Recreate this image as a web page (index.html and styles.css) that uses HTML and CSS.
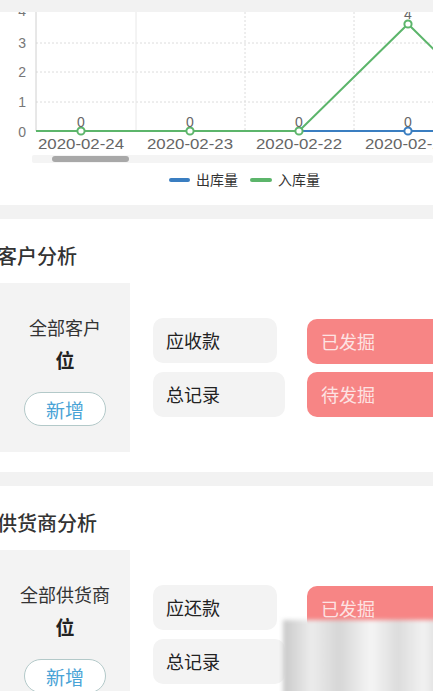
FILE: index.html
```html
<!DOCTYPE html>
<html lang="zh">
<head>
  <meta charset="UTF-8">
  <meta name="viewport" content="width=device-width, initial-scale=1.0">
  <title>统计</title>
  <link rel="stylesheet" href="styles.css">
</head>
<body>
  <section class="chart-box">
    <svg class="chart" viewBox="0 12 433 193" width="433" height="193">
      <!-- 网格 -->
      <g class="grid">
        <line x1="36" y1="43" x2="433" y2="43"/>
        <line x1="36" y1="72" x2="433" y2="72"/>
        <line x1="36" y1="102" x2="433" y2="102"/>
        <line class="solid" x1="136" y1="12" x2="136" y2="131"/>
        <line x1="245" y1="12" x2="245" y2="131"/>
        <line x1="354" y1="12" x2="354" y2="131"/>
      </g>
      <line class="axis" x1="36" y1="12" x2="36" y2="131"/>
      <g class="ylabels">
        <text x="26" y="16">4</text>
        <text x="26" y="48">3</text>
        <text x="26" y="77">2</text>
        <text x="26" y="107">1</text>
        <text x="26" y="137">0</text>
      </g>
      <polyline class="line-out" points="36,131 530,131"/>
      <polyline class="line-in" points="36,131 299,131 408,24 517,131"/>
      <g class="dot-in">
        <circle cx="81" cy="131" r="3.6"/>
        <circle cx="190" cy="131" r="3.6"/>
        <circle cx="299" cy="131" r="3.6"/>
        <circle cx="408" cy="24" r="3.6"/>
      </g>
      <circle class="dot-out" cx="408" cy="131" r="3.6"/>
      <g class="vlabels">
        <text x="81" y="127">0</text>
        <text x="190" y="127">0</text>
        <text x="299" y="127">0</text>
        <text x="408" y="127">0</text>
        <text x="408" y="19">4</text>
      </g>
      <g class="xlabels">
        <text x="38" y="149" textLength="86" lengthAdjust="spacingAndGlyphs">2020-02-24</text>
        <text x="147" y="149" textLength="86" lengthAdjust="spacingAndGlyphs">2020-02-23</text>
        <text x="256" y="149" textLength="86" lengthAdjust="spacingAndGlyphs">2020-02-22</text>
        <text x="365" y="149" textLength="86" lengthAdjust="spacingAndGlyphs">2020-02-21</text>
      </g>
      <rect class="track" x="32" y="155" width="401" height="8" rx="2"/>
      <rect class="thumb" x="52" y="156" width="77" height="6" rx="3"/>
      <g class="legend">
        <rect class="out" x="169" y="178" width="21" height="4" rx="2"/>
        <text x="196" y="185">出库量</text>
        <rect class="in" x="250" y="178" width="22" height="4" rx="2"/>
        <text x="278" y="185">入库量</text>
      </g>
    </svg>
  </section>

  <section class="panel">
    <h3 class="panel-title">客户分析</h3>
    <div class="panel-row">
      <div class="total-card">
        <div class="total-name">全部客户</div>
        <div class="total-unit">位</div>
        <button class="btn-add">新增</button>
      </div>
      <div class="col-grey">
        <div class="pill grey w1">应收款</div>
        <div class="pill grey w2">总记录</div>
      </div>
      <div class="col-red">
        <div class="pill red">已发掘</div>
        <div class="pill red">待发掘</div>
      </div>
    </div>
  </section>

  <section class="panel">
    <h3 class="panel-title">供货商分析</h3>
    <div class="panel-row">
      <div class="total-card">
        <div class="total-name">全部供货商</div>
        <div class="total-unit">位</div>
        <button class="btn-add">新增</button>
      </div>
      <div class="col-grey">
        <div class="pill grey w1">应还款</div>
        <div class="pill grey w2">总记录</div>
      </div>
      <div class="col-red">
        <div class="pill red">已发掘</div>
        <div class="pill red">待发掘</div>
      </div>
    </div>
  </section>

  <div class="blur-mark"></div>
</body>
</html>
```

FILE: styles.css
```css
html {
  overflow: hidden;
}

body {
  margin: 0;
  padding: 0;
  width: 433px;
  height: 691px;
  overflow: hidden;
  position: relative;
  background-color: #f2f2f2;
  color: #333;
  font-family: "Liberation Sans", "Noto Sans CJK SC", sans-serif;
}

.chart-box {
  margin-top: 12px;
  height: 193px;
  background-color: #fff;
}

.chart {
  display: block;
}

.grid line {
  stroke: #dcdcdc;
  stroke-width: 1;
  stroke-dasharray: 2 2;
}

.grid line.solid {
  stroke: #e8e8e8;
  stroke-dasharray: none;
}

.axis {
  stroke: #d0d0d0;
  stroke-width: 1;
}

.ylabels text {
  font-size: 14px;
  fill: #777;
  text-anchor: end;
}

.line-out {
  fill: none;
  stroke: #3a7ec1;
  stroke-width: 2;
}

.line-in {
  fill: none;
  stroke: #5cb56b;
  stroke-width: 2;
}

.dot-in circle {
  fill: #fff;
  stroke: #5cb56b;
  stroke-width: 2;
}

.dot-out {
  fill: #fff;
  stroke: #3a7ec1;
  stroke-width: 2;
}

.vlabels text {
  font-size: 14px;
  fill: #666;
  text-anchor: middle;
}

.xlabels text {
  font-size: 14px;
  fill: #666;
}

.track {
  fill: #f4f4f4;
}

.thumb {
  fill: #a8a8a8;
}

.legend text {
  font-size: 14px;
  fill: #333;
  font-family: "Noto Sans CJK SC", sans-serif;
}

.legend .out {
  fill: #3a7ec1;
}

.legend .in {
  fill: #5cb56b;
}

.panel {
  margin-top: 14px;
  height: 253px;
  background-color: #fff;
  overflow: hidden;
}

.panel-title {
  margin: 0;
  padding-top: 24px;
  height: 40px;
  line-height: 26px;
  font-size: 20px;
  font-weight: 500;
  text-indent: -3px;
  font-family: "Noto Sans CJK SC", sans-serif;
}

.panel-row {
  display: flex;
  align-items: center;
}

.total-card {
  width: 130px;
  height: 169px;
  flex-shrink: 0;
  box-sizing: border-box;
  padding-top: 32px;
  background-color: #f3f3f3;
  display: flex;
  flex-direction: column;
  align-items: center;
  font-family: "Noto Sans CJK SC", sans-serif;
}

.total-name {
  font-size: 18px;
  line-height: 24px;
  color: #333;
}

.total-unit {
  margin-top: 9px;
  font-size: 19px;
  line-height: 24px;
  font-weight: bold;
  color: #222;
}

.btn-add {
  margin-top: 20px;
  width: 82px;
  height: 34px;
  border: 1px solid #b3c9c9;
  border-radius: 17px;
  background: #fff;
  color: #49a3d6;
  font-size: 19px;
  font-family: "Noto Sans CJK SC", sans-serif;
  padding: 0;
}

.col-grey {
  margin-left: 23px;
  display: flex;
  flex-direction: column;
  gap: 9px;
}

.col-red {
  margin-left: 22px;
  display: flex;
  flex-direction: column;
  gap: 8px;
}

.pill {
  height: 45px;
  line-height: 45px;
  border-radius: 10px;
  box-sizing: border-box;
  font-size: 18px;
  font-family: "Noto Sans CJK SC", sans-serif;
}

.pill.grey {
  background-color: #f3f3f3;
  color: #222;
  padding-left: 13px;
}

.pill.w1 {
  width: 124px;
}

.pill.w2 {
  width: 132px;
}

.pill.red {
  width: 150px;
  background-color: #f78585;
  color: #fde3e3;
  padding-left: 14px;
}

.blur-mark {
  position: absolute;
  left: 283px;
  top: 620px;
  width: 160px;
  height: 80px;
  background: linear-gradient(90deg, #c9c9c9 0%, #ececec 18%, #d6d6d6 35%, #f5f5f5 55%, #dcdcdc 72%, #f2f2f2 88%, #d8d8d8 100%);
  filter: blur(2px);
}
```
